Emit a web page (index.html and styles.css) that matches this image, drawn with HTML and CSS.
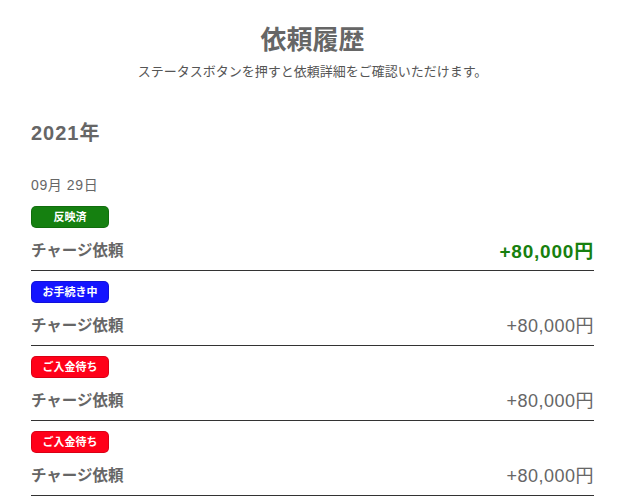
FILE: index.html
```html
<!DOCTYPE html>
<html lang="ja">
<head>
    <meta charset="UTF-8">
    <meta name="viewport" content="width=device-width, initial-scale=1.0">
    <title>依頼履歴</title>
    <link rel="stylesheet" href="styles.css">
</head>
<body>
    <div class="container">
        <div class="header">
            <h1>依頼履歴</h1>
            <p class="lead">ステータスボタンを押すと依頼詳細をご確認いただけます。</p>
        </div>

        <h2 class="year">2021年</h2>
        <p class="date">09月 29日</p>

        <ul class="history">
            <li class="item">
                <span class="badge done">反映済</span>
                <div class="row">
                    <span class="name">チャージ依頼</span>
                    <span class="amount plus">+80,000円</span>
                </div>
            </li>
            <li class="item">
                <span class="badge progress">お手続き中</span>
                <div class="row">
                    <span class="name">チャージ依頼</span>
                    <span class="amount">+80,000円</span>
                </div>
            </li>
            <li class="item">
                <span class="badge waiting">ご入金待ち</span>
                <div class="row">
                    <span class="name">チャージ依頼</span>
                    <span class="amount">+80,000円</span>
                </div>
            </li>
            <li class="item">
                <span class="badge waiting">ご入金待ち</span>
                <div class="row">
                    <span class="name">チャージ依頼</span>
                    <span class="amount">+80,000円</span>
                </div>
            </li>
        </ul>
    </div>
</body>
</html>
```

FILE: styles.css
```css
* {
    box-sizing: border-box;
    margin: 0;
    padding: 0;
    font-family: "Liberation Sans", "Noto Sans CJK JP", sans-serif;
}

body {
    background-color: white;
    color: #666;
}

.container {
    padding: 0 40px 0 31px;
}

.header {
    text-align: center;
    padding-top: 25px;
}

.header h1 {
    font-size: 26px;
    line-height: 30px;
    font-weight: bold;
    color: #666;
}

.lead {
    margin-top: 9px;
    font-size: 13px;
    line-height: 16px;
    color: #555;
}

.year {
    margin-top: 41px;
    font-size: 20px;
    line-height: 24px;
    letter-spacing: 1px;
    font-weight: bold;
}

.date {
    margin-top: 31px;
    font-size: 14px;
    line-height: 18px;
    letter-spacing: 0.6px;
}

.history {
    list-style: none;
    margin-top: 12px;
}

.item {
    margin-bottom: 10px;
    border-bottom: 1px solid #333;
}

.badge {
    display: block;
    width: 78px;
    height: 22px;
    line-height: 20px;
    border-radius: 5px;
    border: 1px solid rgba(0,0,0,0.15);
    text-align: center;
    font-size: 11px;
    font-weight: bold;
    color: white;
}

.badge.done {
    background: #158010;
}

.badge.progress {
    background: #1414ff;
}

.badge.waiting {
    background: #ff0019;
}

.row {
    display: flex;
    justify-content: space-between;
    align-items: center;
    height: 22px;
    margin-top: 10px;
    margin-bottom: 10px;
}

.name {
    font-size: 15.5px;
    font-weight: bold;
}

.amount {
    font-size: 18px;
    letter-spacing: 0.5px;
}

.amount.plus {
    font-size: 19px;
    letter-spacing: 0.8px;
    font-weight: bold;
    color: #17800e;
}
```
